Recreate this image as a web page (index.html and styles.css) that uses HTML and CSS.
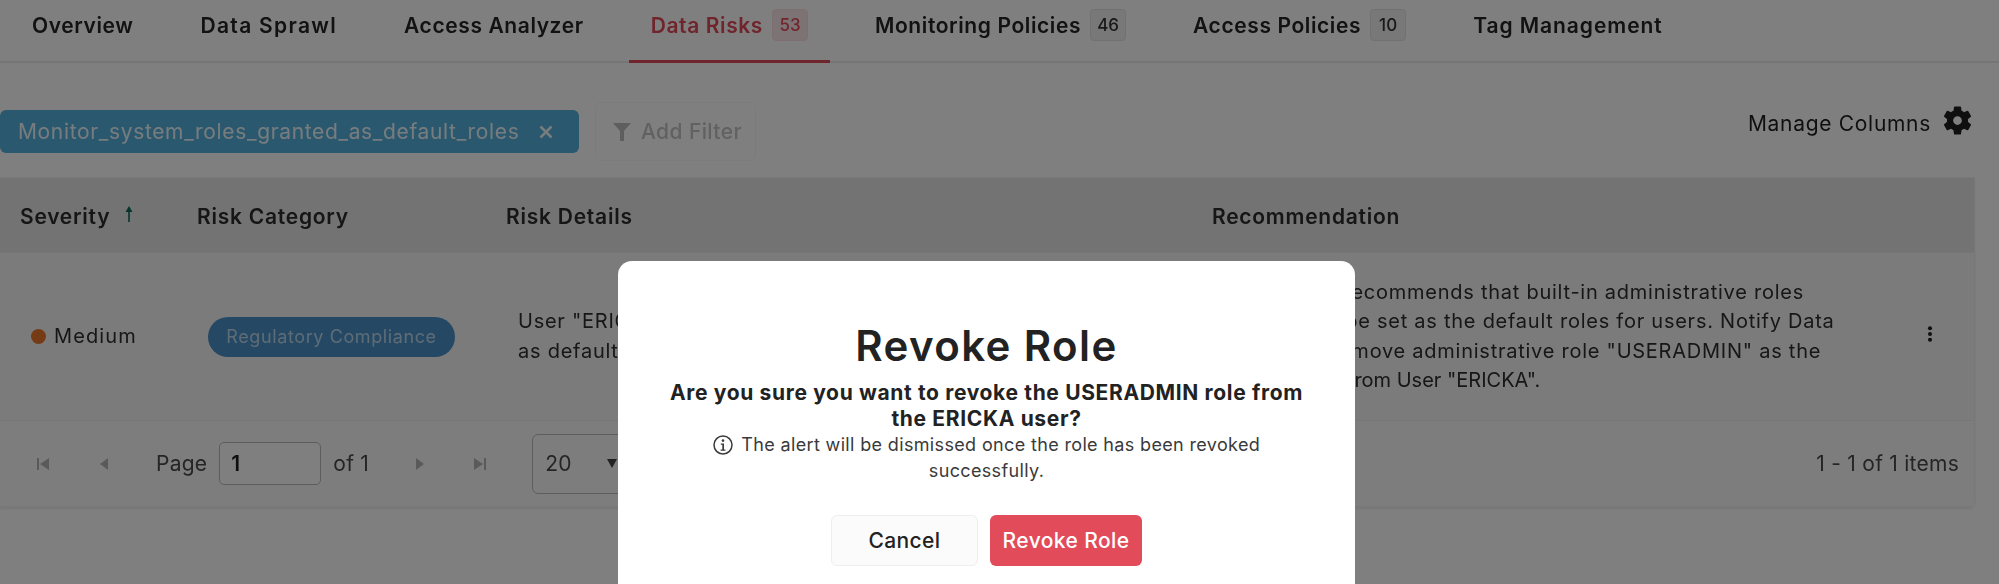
FILE: index.html
```html
<!DOCTYPE html>
<html lang="en">
<head>
<meta charset="utf-8">
<title>Data Risks</title>
<link rel="stylesheet" href="styles.css">
</head>
<body>
<div class="page">
  <nav class="tabs">
    <a class="tab">Overview</a>
    <a class="tab tab-sprawl">Data Sprawl</a>
    <a class="tab">Access Analyzer</a>
    <a class="tab active">Data Risks <span class="count">53</span></a>
    <a class="tab">Monitoring Policies <span class="count">46</span></a>
    <a class="tab">Access Policies <span class="count">10</span></a>
    <a class="tab tab-tag">Tag Management</a>
  </nav>
  <div class="toolbar">
    <div class="filters">
      <span class="chip">Monitor_system_roles_granted_as_default_roles
        <svg class="chip-x" viewBox="0 0 14 14"><path d="M1.500 1.500 12.500 12.500M12.500 1.500 1.500 12.500"/></svg>
      </span>
      <button class="add-filter">
        <svg class="funnel" viewBox="0 0 18 18"><path d="M0 0h18L11 8v10H7V8z"/></svg>
        Add Filter
      </button>
    </div>
    <div class="manage">Manage Columns
      <svg class="gear" viewBox="0 0 24 24"><path d="M19.140 12.940c.04-.3.06-.61.06-.94s-.02-.64-.07-.94l2.030-1.580a.49.49 0 0 0 .12-.61l-1.920-3.320a.49.49 0 0 0-.59-.22l-2.390.96a7 7 0 0 0-1.620-.94l-.36-2.540a.48.48 0 0 0-.48-.41h-3.840a.48.48 0 0 0-.47.41l-.36 2.540c-.59.24-1.130.57-1.620.94l-2.390-.96a.49.49 0 0 0-.59.22L2.740 8.870a.48.48 0 0 0 .12.61l2.030 1.580c-.05.3-.09.63-.09.94s.02.64.07.94l-2.030 1.580a.49.49 0 0 0-.12.61l1.920 3.320c.12.22.37.29.59.22l2.390-.96c.5.38 1.030.7 1.620.94l.36 2.540c.05.24.24.41.48.41h3.840c.24 0 .44-.17.47-.41l.36-2.540c.59-.24 1.130-.56 1.620-.94l2.390.96c.22.08.47 0 .59-.22l1.920-3.320a.47.47 0 0 0-.12-.61zM12 15a3 3 0 1 1 0-6 3 3 0 0 1 0 6z"/></svg>
    </div>
  </div>
  <section class="table">
    <div class="thead">
      <div class="th">Severity <svg class="sort" viewBox="0 0 10 16"><path d="M5 0 1.500 6h2.700v10h1.600V6h2.700z"/></svg></div>
      <div class="th">Risk Category</div>
      <div class="th">Risk Details</div>
      <div class="th">Recommendation</div>
    </div>
    <div class="trow">
      <div class="td td-sev"><span class="dot"></span>Medium</div>
      <div class="td td-cat"><span class="pill">Regulatory Compliance</span></div>
      <div class="td td-det">User "ERICKA"<br>as default role</div>
      <div class="td td-rec">Snowflake recommends that built-in administrative roles<br>should not be set as the default roles for users. Notify Data<br>Owner to remove administrative role "USERADMIN" as the<span class="rec-last">from User "ERICKA".</span></div>
      <div class="td td-more"><svg class="kebab" viewBox="0 0 6 18"><circle cx="3" cy="2.500" r="2.300"/><circle cx="3" cy="9" r="2.300"/><circle cx="3" cy="15.500" r="2.300"/></svg></div>
    </div>
    <div class="tfoot">
      <div class="pager">
        <svg class="pg pg-first" viewBox="0 0 12 12"><path d="M0 0h2v12H0zM12 0v12L3 6z"/></svg>
        <svg class="pg pg-prev" viewBox="0 0 8 12"><path d="M8 0v12L0 6z"/></svg>
        <span class="pg-page">Page</span>
        <input class="pg-input" value="1" aria-label="Page">
        <span class="pg-of">of 1</span>
        <svg class="pg pg-next" viewBox="0 0 8 12"><path d="M0 0v12l8-6z"/></svg>
        <svg class="pg pg-last" viewBox="0 0 12 12"><path d="M10 0h2v12h-2zM0 0v12l9-6z"/></svg>
        <div class="size">20 <span class="caret"></span></div>
      </div>
      <div class="items">1 - 1 of 1 items</div>
    </div>
  </section>
</div>
<div class="overlay"></div>
<div class="modal" role="dialog">
  <h2 class="modal-title">Revoke Role</h2>
  <p class="modal-q">Are you sure you want to revoke the USERADMIN role from<br>the ERICKA user?</p>
  <p class="modal-note"><svg class="info" viewBox="0 0 20 20"><circle cx="10" cy="10" r="9" fill="none" stroke="currentColor" stroke-width="1.500"/><circle cx="10" cy="5.600" r="1.300" fill="currentColor"/><path d="M7.800 8.400h3.200v6h1.400v1.300H7.600v-1.300H9.300V9.700H7.800z" fill="currentColor"/></svg> The alert will be dismissed once the role has been revoked<br>successfully.</p>
  <div class="modal-actions">
    <button class="btn btn-cancel">Cancel</button>
    <button class="btn btn-revoke">Revoke Role</button>
  </div>
</div>
</body>
</html>
```
FILE: styles.css
```css
* { box-sizing: border-box; }
html, body { margin: 0; height: 584px; overflow: hidden; background: #fff; }
body { font-family: Inter, "Noto Sans", sans-serif; color: #1f1f1f; }
.page { width: 1999px; height: 584px; background: #fff; filter: blur(.4px); }

.tabs { display: flex; gap: 23px; height: 63px; padding-left: 10px; border-bottom: 2px solid #eaeaea; }
.tab { display: flex; align-items: center; gap: 9px; height: 63px; padding: 0 22px 13px; font-size: 21px; letter-spacing: .6px; font-weight: 600; color: #242424; white-space: nowrap; }
.tab-sprawl { letter-spacing: 1.300px; }
.tab-tag { letter-spacing: .95px; }
.tab.active { color: #e04a5a; border-bottom: 3px solid #e04a5a; padding-bottom: 10px; }
.count { display: flex; align-items: center; justify-content: center; width: 36px; height: 32px; border: 1px solid #e2e2e2; border-radius: 4px; background: #f1f1f1; font-size: 17px; letter-spacing: 0; font-weight: 500; color: #333; }
.active .count { background: #fbe6e8; border-color: #fbdfe2; color: #e04a5a; }

.toolbar { display: flex; justify-content: space-between; height: 114px; padding: 39px 24px 0 0; }
.filters { display: flex; gap: 16px; align-items: center; height: 59px; }
.chip { display: flex; align-items: center; justify-content: space-between; width: 579px; height: 43px; padding: 0 26px 0 18px; border-radius: 6px; background: #54b2de; color: #f0f8fc; font-size: 21px; letter-spacing: .65px; white-space: nowrap; }
.chip-x { width: 14px; height: 14px; stroke: #f0f8fc; stroke-width: 2.500; fill: none; }
.add-filter { display: flex; align-items: center; gap: 10px; width: 161px; height: 59px; padding: 0 0 0 17px; border: 1px solid #f7f7f7; border-radius: 6px; background: #fff; color: #c2c2c2; font: 500 21px Inter, "Noto Sans", sans-serif; letter-spacing: .4px; }
.funnel { width: 18px; height: 18px; fill: #bcbcbc; }
.manage { display: flex; align-items: flex-start; gap: 9px; margin-top: 8px; font-size: 21px; letter-spacing: .7px; line-height: 28px; color: #1f1f1f; }
.gear { width: 35px; height: 35px; margin-top: -7px; fill: #1f1f1f; }

.table { width: 1975px; height: 330px; border: 1px solid #f0f0f0; border-left: 0; border-radius: 0 0 6px 0; box-shadow: 0 2px 3px rgba(0,0,0,.08); background: #fbfbfb; }
.thead, .trow { display: grid; grid-template-columns: 177px 309px 706px 1fr; }
.thead { height: 75px; padding-top: 2px; background: #e6e6e6; align-items: center; border-bottom: 1px solid #ededed; }
.th { padding-left: 20px; font-size: 21px; letter-spacing: .75px; font-weight: 600; color: #2c2c2c; white-space: nowrap; }
.sort { width: 10px; height: 16px; margin-left: 8px; fill: #0d6a5c; vertical-align: 2px; }
.trow { grid-template-columns: 177px 309px 706px 1fr 47px; height: 168px; align-items: center; border-bottom: 1px solid #eee; background: #f7f7f7; font-size: 20px; letter-spacing: .75px; line-height: 29.500px; color: #2e2e2e; }
.td-sev { display: flex; align-items: center; gap: 8px; padding-left: 31px; letter-spacing: 1.100px; }
.dot { width: 15px; height: 15px; border-radius: 50%; background: #e9762b; }
.td-cat { padding-left: 31px; }
.pill { display: block; width: 247px; height: 40px; border-radius: 20px; background: #4a92c8; color: #bcd8ec; font-size: 18px; letter-spacing: .6px; line-height: 40px; text-align: center; white-space: nowrap; }
.td-det { padding-left: 32px; white-space: nowrap; }
.td-rec { padding-left: 40px; white-space: nowrap; }
.rec-last { display: block; padding-left: 115px; letter-spacing: 0; }
.td-more { display: flex; margin-top: -6px; }
.kebab { width: 6px; height: 16px; fill: #1f1f1f; }

.tfoot { display: flex; justify-content: space-between; align-items: center; height: 85px; padding: 0 15px 0 0; font-size: 21px; letter-spacing: .25px; color: #4a4a4a; background: #fbfbfb; }
.pager { display: flex; align-items: center; }
.pg { height: 12px; fill: #b5b5b5; }
.pg-first { width: 12px; margin-left: 37px; }
.pg-prev { width: 8px; margin-left: 51px; }
.pg-page { margin-left: 48px; }
.pg-input { width: 102px; height: 43px; margin-left: 12px; padding: 0 11px; border: 1px solid #bbb; border-radius: 5px; background: #fff; color: #1f1f1f; font: 600 21px Inter, sans-serif; }
.pg-of { margin-left: 12px; }
.pg-next { width: 8px; margin-left: 47px; }
.pg-last { width: 12px; margin-left: 50px; }
.size { display: flex; align-items: center; justify-content: space-between; width: 110px; height: 60px; margin-left: 46px; padding: 0 24px 0 12px; border: 1px solid #bbb; border-radius: 6px; background: #fbfbfb; }
.caret { width: 0; height: 0; border-left: 5px solid transparent; border-right: 5px solid transparent; border-top: 9px solid #444; }

.overlay { position: fixed; inset: 0; background: rgba(0,0,0,.5); }
.modal { position: fixed; left: 618px; top: 261px; width: 737px; height: 340px; padding-top: 61px; border-radius: 14px; background: #fff; text-align: center; color: #222; }
.modal-title { margin: 0; font-size: 42px; letter-spacing: 1.400px; line-height: 48px; font-weight: 600; color: #222; }
.modal-q { margin: 10px 0 0; font-size: 21px; letter-spacing: .65px; line-height: 26px; font-weight: 700; }
.modal-note { margin: 0; font-size: 18px; letter-spacing: .35px; line-height: 26px; color: #3a3a3a; }
.info { width: 20px; height: 20px; vertical-align: -4px; margin-right: 3px; }
.modal-actions { display: flex; justify-content: center; gap: 12px; margin-top: 31px; }
.btn { height: 51px; border-radius: 6px; font: 500 21px Inter, sans-serif; letter-spacing: .4px; }
.btn-cancel { width: 147px; border: 1px solid #eee; background: #fbfbfb; color: #222; }
.btn-revoke { width: 152px; border: 0; background: #e24b5a; color: #fff; }
```
